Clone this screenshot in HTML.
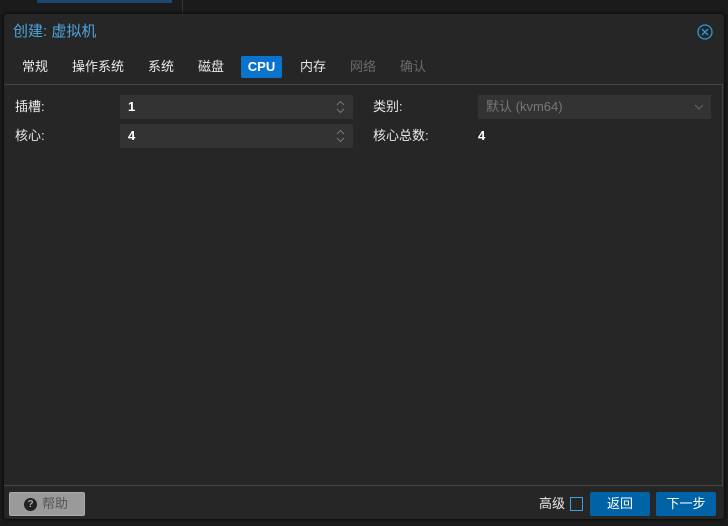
<!DOCTYPE html>
<html><head><meta charset="utf-8"><style>
*{margin:0;padding:0;box-sizing:border-box}
body{width:728px;height:526px;background:#1b1b1b;position:relative;overflow:hidden;font-family:"Liberation Sans","Noto Sans CJK SC",sans-serif;font-size:13px;color:#f0f0f0}
.abs{position:absolute}
.dlg{left:4px;top:14px;width:720px;height:505px;background:#262626;border-radius:3px;box-shadow:0 0 4px #000}
.tab{top:56px;height:22px;line-height:22px;font-size:13px;color:#e8e8e8;padding:0 7px}
.fld{background:#333;height:24px;line-height:24px;padding-left:8px;font-weight:bold;color:#fff}
.lbl{font-size:13px;color:#e8e8e8;line-height:16px}
.btn{height:24px;line-height:24px;text-align:center;background:#0063a6;color:#fff;border-radius:2px;font-size:13px}
</style></head><body>
<div class="abs" style="left:37px;top:0;width:135px;height:3px;background:#1c4870"></div>
<div class="abs" style="left:182px;top:0;width:1px;height:14px;background:#333"></div>
<div class="abs dlg"></div>
<div class="abs" style="left:13px;top:22px;font-size:15px;line-height:20px;color:#4fa3e0">创建: 虚拟机</div>
<svg class="abs" style="left:697px;top:24px" width="16" height="16" viewBox="0 0 16 16"><circle cx="8" cy="8" r="7" fill="none" stroke="#2b9ad8" stroke-width="1.3"/><path d="M5 5L11 11M11 5L5 11" stroke="#2b9ad8" stroke-width="1.3"/></svg>
<div class="abs tab" style="left:15px">常规</div>
<div class="abs tab" style="left:65px">操作系统</div>
<div class="abs tab" style="left:141px">系统</div>
<div class="abs tab" style="left:191px">磁盘</div>
<div class="abs tab" style="left:241px;width:41px;background:#0a74cc;color:#fff;border-radius:2px;font-weight:bold;text-align:center;padding:0">CPU</div>
<div class="abs tab" style="left:293px">内存</div>
<div class="abs tab" style="left:343px;color:#6a6a6a">网络</div>
<div class="abs tab" style="left:393px;color:#6a6a6a">确认</div>
<div class="abs" style="left:4px;top:84px;width:719px;height:402px;border:1px solid #444;border-left:none"></div>
<div class="abs lbl" style="left:15px;top:99px">插槽:</div>
<div class="abs lbl" style="left:15px;top:128px">核心:</div>
<div class="abs fld" style="left:120px;top:95px;width:233px">1</div>
<div class="abs fld" style="left:120px;top:124px;width:233px">4</div>
<svg class="abs" style="left:336px;top:99px" width="9" height="16"><path d="M1 6L4.5 2.5L8 6M1 10L4.5 13.5L8 10" stroke="#777" fill="none"/></svg>
<svg class="abs" style="left:336px;top:128px" width="9" height="16"><path d="M1 6L4.5 2.5L8 6M1 10L4.5 13.5L8 10" stroke="#777" fill="none"/></svg>
<div class="abs lbl" style="left:373px;top:99px">类别:</div>
<div class="abs lbl" style="left:373px;top:128px">核心总数:</div>
<div class="abs fld" style="left:478px;top:95px;width:233px;font-weight:normal;color:#777">默认 (kvm64)</div>
<svg class="abs" style="left:694px;top:103px" width="10" height="8"><path d="M1 2L5 6L9 2" stroke="#666" fill="none"/></svg>
<div class="abs" style="left:478px;top:128px;font-weight:bold;color:#fff;line-height:16px">4</div>
<div class="abs" style="left:9px;top:492px;width:76px;height:24px;background:#9a9a9a;border:1px solid #aaa;border-radius:2px;color:#555;display:flex;align-items:center;padding-left:14px;gap:5px"><span style="display:inline-block;width:13px;height:13px;border-radius:50%;background:#222;color:#aaa;font-size:10px;line-height:13px;text-align:center;font-weight:bold">?</span><span style="line-height:16px">帮助</span></div>
<div class="abs lbl" style="left:539px;top:496px">高级</div>
<div class="abs" style="left:570px;top:497px;width:13px;height:14px;border:1px solid #3aa0e8"></div>
<div class="abs btn" style="left:590px;top:492px;width:60px">返回</div>
<div class="abs btn" style="left:656px;top:492px;width:60px">下一步</div>
</body></html>
